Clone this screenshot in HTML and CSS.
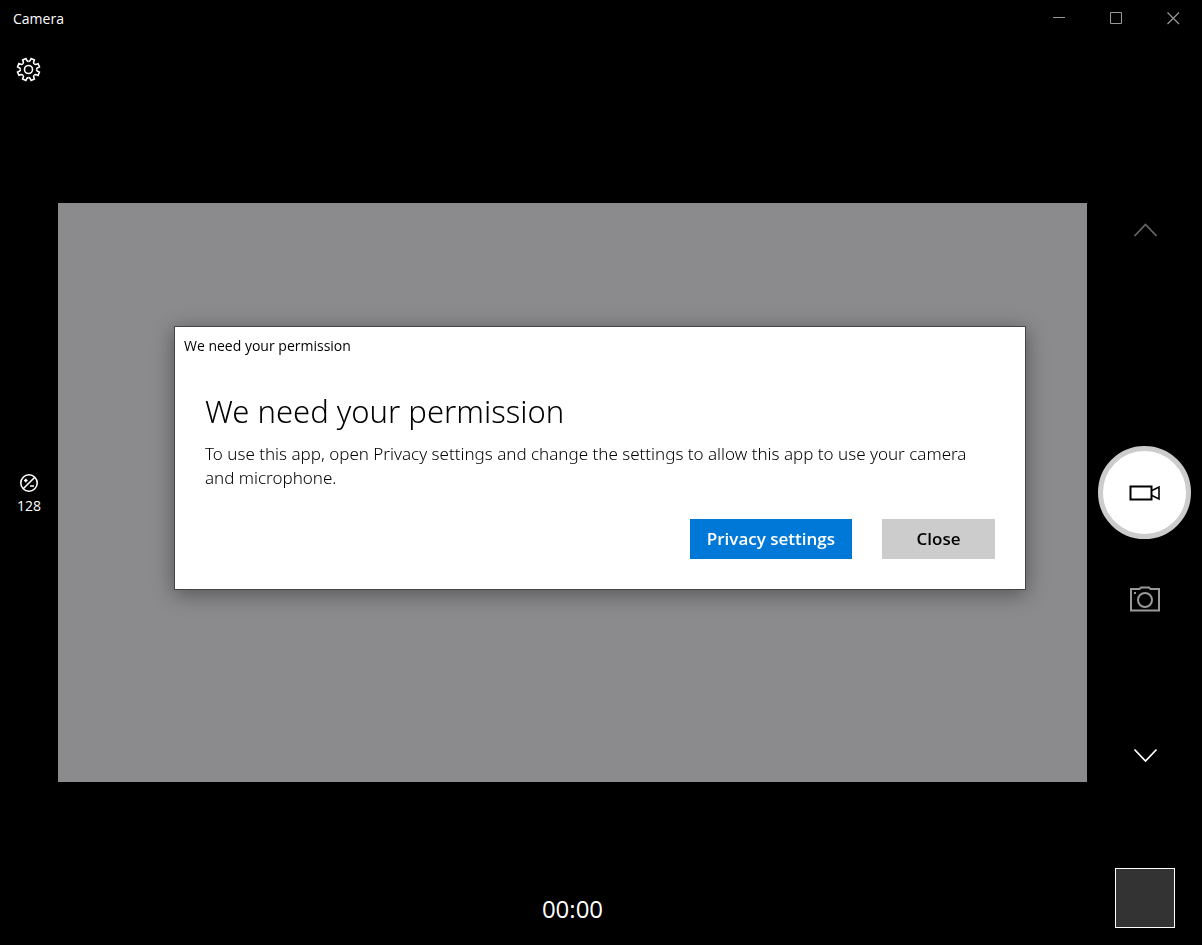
FILE: index.html
```
<!DOCTYPE html>
<html lang="en">

<head>
    <meta charset="UTF-8">
    <meta name="viewport" content="width=device-width, initial-scale=1.0">
    <title>Camera</title>
    <link rel="stylesheet" href="styles.css">
</head>

<body>
    <header class="titlebar">
        <span class="app-name">Camera</span>
        <div class="caption">
            <button type="button" aria-label="Minimize">
                <svg width="13" height="13" viewBox="0 0 13 13"><path d="M0 5.5h12" /></svg>
            </button>
            <button type="button" aria-label="Maximize">
                <svg width="13" height="13" viewBox="0 0 13 13"><path d="M.5 .5h11v11h-11z" /></svg>
            </button>
            <button type="button" aria-label="Close window">
                <svg width="13" height="13" viewBox="0 0 13 13"><path d="M.5 .5l11.5 11.5M12 .5L.5 12" stroke-width="1.2" /></svg>
            </button>
        </div>
    </header>

    <main class="camera">
        <div class="rail left">
            <div class="top">
                <button type="button" class="icon-btn" aria-label="Settings">
                    <svg width="25" height="25" viewBox="-12.5 -12.5 25 25" stroke-width="1.6">
                        <defs>
                            <path id="tooth" d="M0 -8.1Q1 -8.1 1.5 -8.7L2.6 -10.9L5.9 -9.6L5.1 -7.2Q5 -6.4 5.73 -5.73" />
                        </defs>
                        <use href="#tooth" />
                        <use href="#tooth" transform="rotate(45)" />
                        <use href="#tooth" transform="rotate(90)" />
                        <use href="#tooth" transform="rotate(135)" />
                        <use href="#tooth" transform="rotate(180)" />
                        <use href="#tooth" transform="rotate(225)" />
                        <use href="#tooth" transform="rotate(270)" />
                        <use href="#tooth" transform="rotate(315)" />
                        <circle r="4" />
                    </svg>
                </button>
            </div>
            <button type="button" class="exposure" aria-label="Brightness 128">
                <svg width="20" height="20" viewBox="0 0 20 20" stroke-width="1.6">
                    <circle cx="10" cy="10" r="8.2" />
                    <path d="M4.2 15.8L15.8 4.2M5 7.5h3.6M6.8 5.7v3.6M11 13h4" />
                </svg>
                <span>128</span>
            </button>
            <div class="bottom"></div>
        </div>

        <div class="stage">
            <div class="top"></div>
            <div class="preview"></div>
            <div class="bottom">
                <time class="timer">00:00</time>
            </div>
        </div>

        <div class="rail right">
            <div class="top">
                <button type="button" class="icon-btn up" aria-label="Previous mode">
                    <svg width="25" height="14" viewBox="0 0 25 14" stroke-width="1.8"><path d="M1.5 13L12.5 1.5L23.5 13" /></svg>
                </button>
            </div>
            <button type="button" class="record" aria-label="Take video">
                <svg width="31" height="17" viewBox="0 0 31 17" stroke-width="2">
                    <path d="M1.5 2.5h21v13h-21z" />
                    <path d="M23 6.5L30 3V15L23 11.5" stroke-width="1.6" />
                </svg>
            </button>
            <div class="bottom">
                <button type="button" class="icon-btn photo" aria-label="Take photo">
                    <svg width="31" height="26" viewBox="0 0 31 26" stroke-width="2">
                        <path d="M1 3h8.5l1.5 -1.5h8l1.5 1.5H29v21.5H1z" />
                        <circle cx="15" cy="14" r="7" />
                        <path d="M4 7h2" />
                    </svg>
                </button>
                <button type="button" class="icon-btn down" aria-label="Next mode">
                    <svg width="25" height="14" viewBox="0 0 25 14" stroke-width="1.8"><path d="M1.5 1.5L12.5 13L23.5 1.5" /></svg>
                </button>
                <button type="button" class="thumb" aria-label="Camera roll"></button>
            </div>
        </div>
    </main>

    <div class="overlay">
        <section class="dialog" role="dialog" aria-labelledby="dialog-title">
            <div class="dialog-bar">We need your permission</div>
            <div class="dialog-body">
                <h1 id="dialog-title">We need your permission</h1>
                <p>To use this app, open Privacy settings and change the settings to allow this app to use your camera and microphone.</p>
                <div class="actions">
                    <button type="button" class="primary">Privacy settings</button>
                    <button type="button">Close</button>
                </div>
            </div>
        </section>
    </div>
</body>

</html>
```

FILE: styles.css
```
* {
    box-sizing: border-box;
    padding: 0;
    margin: 0;
}

body {
    display: flex;
    flex-direction: column;
    min-height: 100vh;
    background: #000;
    color: #fff;
    font-family: "Segoe UI", "Open Sans", "Noto Sans", sans-serif;
    font-size: 14px;
}

button {
    border: 0;
    background: none;
    color: inherit;
    font: inherit;
}

svg {
    display: block;
    fill: none;
    stroke: currentColor;
}

/* title bar */
.titlebar {
    display: flex;
    justify-content: space-between;
    height: 40px;
}

.app-name {
    padding-left: 13px;
    line-height: 38px;
}

.caption {
    display: flex;
    height: 36px;
    color: #999;
}

.caption button {
    display: flex;
    align-items: center;
    justify-content: center;
    width: 57px;
}

/* camera view */
.camera {
    flex: 1;
    display: grid;
    grid-template-columns: 58px 1fr 115px;
}

.rail,
.stage {
    display: grid;
    grid-template-rows: 1fr auto 1fr;
    justify-items: center;
}

.top,
.bottom {
    display: flex;
    flex-direction: column;
    align-items: center;
}

.icon-btn {
    display: flex;
    align-items: center;
    justify-content: center;
    width: 57px;
    height: 44px;
}

.left .icon-btn {
    padding-right: 2px;
}

.right .icon-btn {
    padding-left: 2px;
}

.left .top {
    padding-top: 7px;
}

.exposure {
    display: flex;
    flex-direction: column;
    align-items: center;
    gap: 2px;
    padding-top: 4px;
    line-height: 22px;
}

.preview {
    width: 100%;
    aspect-ratio: 16 / 9;
    background: #8b8b8d;
}

.stage .bottom {
    justify-content: flex-end;
}

.timer {
    font-size: 24px;
    line-height: 32px;
    padding-bottom: 20px;
}

.right .top {
    justify-content: flex-end;
}

.up {
    margin-bottom: 194px;
    color: #666;
}

.record {
    display: flex;
    align-items: center;
    justify-content: center;
    width: 93px;
    height: 93px;
    border: 5px solid #ccc;
    border-radius: 50%;
    background: #fff;
    color: #000;
}

.photo {
    margin-top: 38px;
    color: #999;
}

.down {
    margin-top: 112px;
}

.thumb {
    width: 60px;
    height: 60px;
    margin-top: auto;
    margin-bottom: 17px;
    border: 1px solid #fff;
    background: #333;
}

/* permission dialog */
.overlay {
    position: fixed;
    inset: 0;
    display: flex;
    align-items: center;
    justify-content: center;
    padding-right: 2px;
    padding-bottom: 30px;
}

.dialog {
    width: 852px;
    max-width: 100%;
    border: 1px solid #444;
    background: #fff;
    color: #000;
    box-shadow: 0 4px 20px rgba(0, 0, 0, 0.4);
}

.dialog-bar {
    padding-left: 9px;
    line-height: 38px;
}

.dialog-body {
    padding: 23px 30px 30px;
}

.dialog h1,
.dialog p {
    font-family: "Segoe UI", "Noto Sans", "Open Sans", sans-serif;
    font-weight: 300;
}

.dialog h1 {
    font-size: 31px;
    line-height: 46px;
}

.dialog p {
    margin-top: 8px;
    padding-right: 18px;
    font-size: 17px;
    line-height: 24px;
}

.actions {
    display: flex;
    justify-content: flex-end;
    gap: 30px;
    margin-top: 29px;
}

.actions button {
    min-width: 113px;
    height: 40px;
    padding: 0 17px;
    background: #ccc;
    font-size: 17px;
    font-weight: 600;
}

.actions .primary {
    background: #0078d7;
    color: #fff;
}
```
